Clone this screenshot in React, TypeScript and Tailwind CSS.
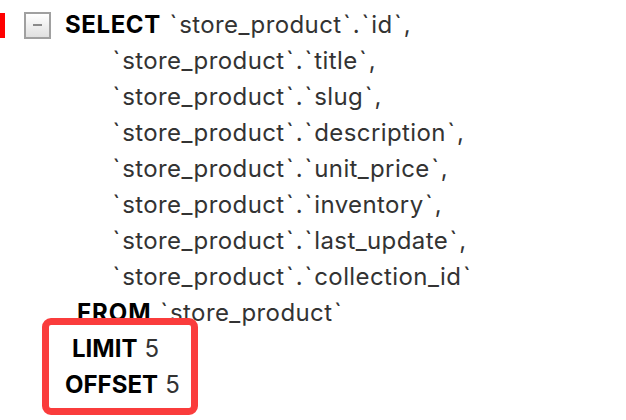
const fields = [
  "title",
  "slug",
  "description",
  "unit_price",
  "inventory",
  "last_update",
  "collection_id",
];

const Tick = () => <span className="mx-[1.5px]">`</span>;

export default function App() {
  return (
    <div
      className="relative w-[626px] h-[420px] bg-white overflow-hidden text-[24px] leading-[36px] tracking-[0.4px] text-[#333333]"
      style={{ fontFamily: "Inter, 'Liberation Sans', sans-serif" }}
    >
      <div className="pt-[7px]">
        <div className="flex items-center">
          <div className="w-[5px] h-[25px] bg-[#ff0000]" />
          <div className="ml-[19px] w-[27px] h-[27px] border-2 border-[#a0a0a0] bg-gradient-to-b from-white to-[#e0e0e0] flex items-center justify-center">
            <div className="w-[9px] h-[2px] bg-[#8a8a8a]" />
          </div>
          <div className="ml-[14px]">
            <span className="font-bold text-black tracking-[0.6px]">SELECT</span>{" "}
            <Tick />store_product<Tick />.<Tick />id<Tick />,
          </div>
        </div>
        {fields.map((f, i) => (
          <div key={f} className="pl-[111px]">
            <Tick />store_product<Tick />.<Tick />{f}<Tick />{i < fields.length - 1 ? "," : ""}
          </div>
        ))}
        <div className="pl-[77px]">
          <span className="font-bold text-black tracking-[1px]">FROM</span>{" "}
          <Tick />store_product<Tick />
        </div>
        <div className="pl-[72px]">
          <span className="font-bold text-black tracking-normal">LIMIT</span> 5
        </div>
        <div className="pl-[65px]">
          <span className="font-bold text-black tracking-normal">OFFSET</span> 5
        </div>
      </div>
      <div className="absolute left-[42px] top-[318px] w-[156px] h-[97px] border-[7px] border-[#fa3c3c] rounded-[9px]" />
    </div>
  );
}
